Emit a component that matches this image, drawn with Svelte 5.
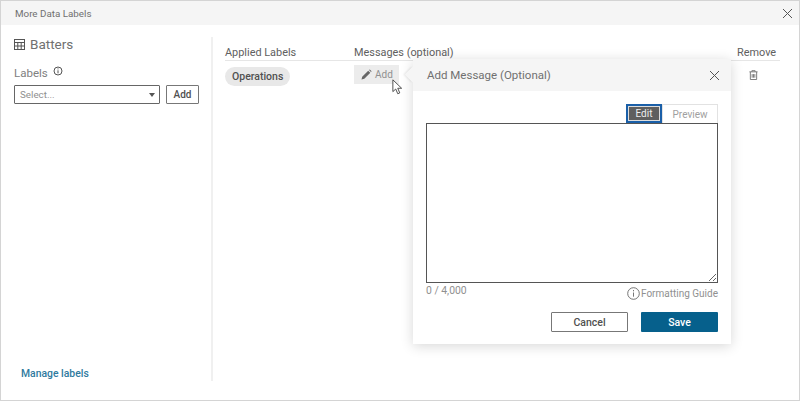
<script>
  let message = $state('')
</script>

<div class="dialog">
  <header class="title">
    <span>More Data Labels</span>
    <button class="close" aria-label="Close">
      <svg width="11" height="11" viewBox="0 0 11 11"><path d="M1 1l9 9M10 1l-9 9" /></svg>
    </button>
  </header>

  <div class="body">
    <aside class="side">
      <div class="sheet">
        <svg width="11" height="11" viewBox="0 0 11 11" class="grid-icon">
          <rect x="0.5" y="0.5" width="10" height="10" />
          <path d="M0 3.5h11M0 7h11M3.8 3v8M7.2 3v8" />
        </svg>
        <span>Batters</span>
      </div>
      <div class="labels-title">
        Labels
        <svg width="10" height="10" viewBox="0 0 10 10" class="info-small">
          <circle cx="5" cy="5" r="4" />
          <path d="M5 4.3v3M5 2.4v1" />
        </svg>
      </div>
      <div class="picker">
        <div class="select">
          <span>Select...</span>
          <i class="caret"></i>
        </div>
        <button class="add-btn">Add</button>
      </div>
      <a class="manage" href="#manage">Manage labels</a>
    </aside>

    <main class="content">
      <div class="table-head">
        <span class="col-label">Applied Labels</span>
        <span class="col-msg">Messages (optional)</span>
        <span class="col-remove">Remove</span>
      </div>
      <div class="table-row">
        <div class="col-label"><span class="pill">Operations</span></div>
        <div class="col-msg">
          <button class="msg-add">
            <svg width="11" height="11" viewBox="0 0 11 11"><path d="M0.5 10.5l0.7-2.8 6-6 2.1 2.1-6 6zM8 1l0.8-0.6 1.8 1.8L10 3z" /></svg>
            Add
          </button>
        </div>
        <div class="col-remove">
          <svg class="trash" width="9" height="10" viewBox="0 0 10 11">
            <path d="M0.5 2h9M3.2 2V0.7h3.6V2M1.5 2v8.5h7V2M3.5 4.5v4M5 4.5v4M6.5 4.5v4" />
          </svg>
        </div>
      </div>
    </main>
  </div>

  <section class="popover">
    <i class="arrow"></i>
    <div class="pop-head">
      <span>Add Message (Optional)</span>
      <button class="close" aria-label="Close message">
        <svg width="11" height="11" viewBox="0 0 11 11"><path d="M1 1l9 9M10 1l-9 9" /></svg>
      </button>
    </div>
    <div class="pop-body">
      <div class="tabs">
        <button class="tab active">Edit</button>
        <button class="tab">Preview</button>
      </div>
      <textarea bind:value={message}></textarea>
      <div class="meta">
        <span class="count">0 / 4,000</span>
        <span class="guide">
          <svg width="13" height="13" viewBox="0 0 13 13">
            <circle cx="6.5" cy="6.5" r="5.8" />
            <path d="M6.5 5.5v4.2M6.5 3v1.3" />
          </svg>
          Formatting Guide
        </span>
      </div>
      <div class="actions">
        <button class="cancel">Cancel</button>
        <button class="save">Save</button>
      </div>
    </div>
  </section>

  <svg class="cursor" width="11" height="16" viewBox="0 0 13 19">
    <path d="M1 1v14l3.4-3.1 2.4 5.6 2.4-1-2.4-5.5h4.6z" />
  </svg>
</div>

<style>
  :global(body) {
    margin: 0;
    background: #fff;
    font-family: Roboto, "Noto Sans", sans-serif;
    color: #555;
  }
  .dialog {
    position: relative;
    box-sizing: border-box;
    width: 800px;
    height: 401px;
    border: 1px solid #d4d4d4;
    display: flex;
    flex-direction: column;
    overflow: hidden;
  }
  button {
    font-family: inherit;
    cursor: pointer;
  }
  .title {
    height: 24px;
    background: #f5f5f5;
    display: flex;
    align-items: center;
    justify-content: space-between;
    padding: 0 6px 0 14px;
    font-size: 9.8px;
    color: #707070;
    flex: none;
  }
  .close {
    border: 0;
    background: none;
    padding: 0;
    width: 11px;
    height: 11px;
    display: flex;
    align-items: center;
    justify-content: center;
  }
  .close path {
    stroke: #555;
    stroke-width: 1;
    fill: none;
  }
  .body {
    flex: 1;
    display: flex;
    padding: 12px 19px 19px 0;
    min-height: 0;
  }
  .side {
    box-sizing: border-box;
    width: 212px;
    border-right: 2px solid #f0f0f0;
    padding: 0 0 0 13px;
    display: flex;
    flex-direction: column;
    flex: none;
  }
  .sheet {
    display: flex;
    align-items: center;
    gap: 5px;
    font-size: 13.5px;
    color: #707070;
    height: 14px;
  }
  .grid-icon {
    fill: none;
    stroke: #555;
    stroke-width: 1;
  }
  .labels-title {
    margin-top: 15px;
    font-size: 11.5px;
    color: #808080;
    display: flex;
    align-items: flex-start;
    gap: 5px;
    height: 15px;
  }
  .info-small {
    fill: none;
    stroke: #555;
    stroke-width: 1;
    margin-top: 0;
  }
  .picker {
    display: flex;
    gap: 6px;
    margin-top: 4px;
  }
  .select {
    box-sizing: border-box;
    width: 146px;
    height: 19px;
    border: 1px solid #666;
    border-radius: 1px;
    display: flex;
    align-items: center;
    justify-content: space-between;
    padding: 0 4px 0 5px;
    font-size: 9.8px;
    color: #909090;
  }
  .caret {
    width: 0;
    height: 0;
    border-left: 3px solid transparent;
    border-right: 3px solid transparent;
    border-top: 4px solid #555;
  }
  .add-btn {
    box-sizing: border-box;
    width: 33px;
    height: 19px;
    border: 1px solid #777;
    border-radius: 1px;
    background: #fff;
    font-size: 10px;
    font-weight: 500;
    color: #505050;
    padding: 0;
  }
  .manage {
    margin-top: auto;
    margin-left: 7px;
    font-size: 10.4px;
    font-weight: 500;
    color: #2f7a9e;
    text-decoration: none;
    margin-bottom: 1px;
  }
  .content {
    flex: 1;
    padding: 9px 0 0 12px;
    min-width: 0;
  }
  .table-head {
    display: flex;
    height: 13px;
    padding-bottom: 1px;
    border-bottom: 1px solid #e6e6e6;
    font-size: 10.9px;
    line-height: 13px;
    color: #606060;
  }
  .table-row {
    display: flex;
    padding-top: 4px;
  }
  .col-label {
    width: 129px;
    flex: none;
  }
  .col-msg {
    flex: 1;
  }
  .col-remove {
    width: 43px;
    flex: none;
  }
  .pill {
    display: inline-block;
    height: 19px;
    line-height: 19px;
    margin-top: 2px;
    padding: 0 7px;
    border-radius: 10px;
    background: #e8e8e8;
    font-size: 10.5px;
    font-weight: 500;
    color: #505050;
  }
  .msg-add {
    height: 19px;
    width: 45px;
    border: 0;
    background: #ececec;
    color: #909090;
    font-size: 10px;
    display: flex;
    align-items: center;
    gap: 3px;
    padding: 0 0 0 7px;
  }
  .msg-add path {
    fill: #666;
  }
  .trash {
    display: block;
    margin: 5px 0 0 12px;
    fill: none;
    stroke: #707070;
    stroke-width: 1;
  }
  .popover {
    position: absolute;
    left: 412px;
    top: 58px;
    width: 318px;
    height: 285px;
    background: #fff;
    box-shadow: 0 2px 12px rgba(0, 0, 0, 0.16);
    display: flex;
    flex-direction: column;
  }
  .arrow {
    position: absolute;
    left: -6px;
    top: 10px;
    width: 11px;
    height: 11px;
    background: #f5f5f5;
    transform: rotate(45deg);
    box-shadow: -1px 1px 2px rgba(0, 0, 0, 0.08);
  }
  .pop-head {
    position: relative;
    height: 32px;
    background: #f5f5f5;
    display: flex;
    align-items: center;
    justify-content: space-between;
    padding: 0 11px 0 14px;
    font-size: 11.5px;
    color: #707070;
    flex: none;
  }
  .pop-body {
    padding: 13px 13px 0 13px;
    display: flex;
    flex-direction: column;
  }
  .tabs {
    display: flex;
    justify-content: flex-end;
    height: 19px;
  }
  .tab {
    box-sizing: border-box;
    width: 56px;
    height: 19px;
    border: 1px solid #e2e2e2;
    border-bottom: 0;
    background: #fff;
    font-size: 10px;
    color: #a0a0a0;
    padding: 0;
  }
  .tab.active {
    width: 36px;
    background: #5f5f5f;
    color: #eee;
    border: 2px solid #1a5fa8;
    box-shadow: inset 0 0 0 1px #ddd;
  }
  textarea {
    box-sizing: border-box;
    display: block;
    width: 292px;
    height: 160px;
    margin: 0;
    border: 1px solid #555;
    border-radius: 0;
    outline: none;
    background: #fff;
  }
  .meta {
    display: flex;
    justify-content: space-between;
    font-size: 10.4px;
    color: #909090;
    margin-top: 1px;
    height: 16px;
  }
  .guide {
    display: flex;
    align-items: center;
    gap: 1px;
    margin-top: 2px;
    font-size: 10px;
  }
  .guide svg {
    fill: none;
    stroke: #666;
    stroke-width: 0.9;
  }
  .actions {
    display: flex;
    justify-content: flex-end;
    gap: 13px;
    margin-top: 12px;
  }
  .cancel, .save {
    box-sizing: border-box;
    width: 77px;
    height: 20px;
    font-size: 10.5px;
    font-weight: 500;
    border-radius: 1px;
    padding: 0;
  }
  .cancel {
    background: #fff;
    border: 1px solid #777;
    color: #505050;
  }
  .save {
    background: #06608c;
    border: 0;
    color: #fff;
  }
  .cursor {
    position: absolute;
    left: 391px;
    top: 78px;
    fill: #fff;
    stroke: #333;
    stroke-width: 1;
  }
</style>
